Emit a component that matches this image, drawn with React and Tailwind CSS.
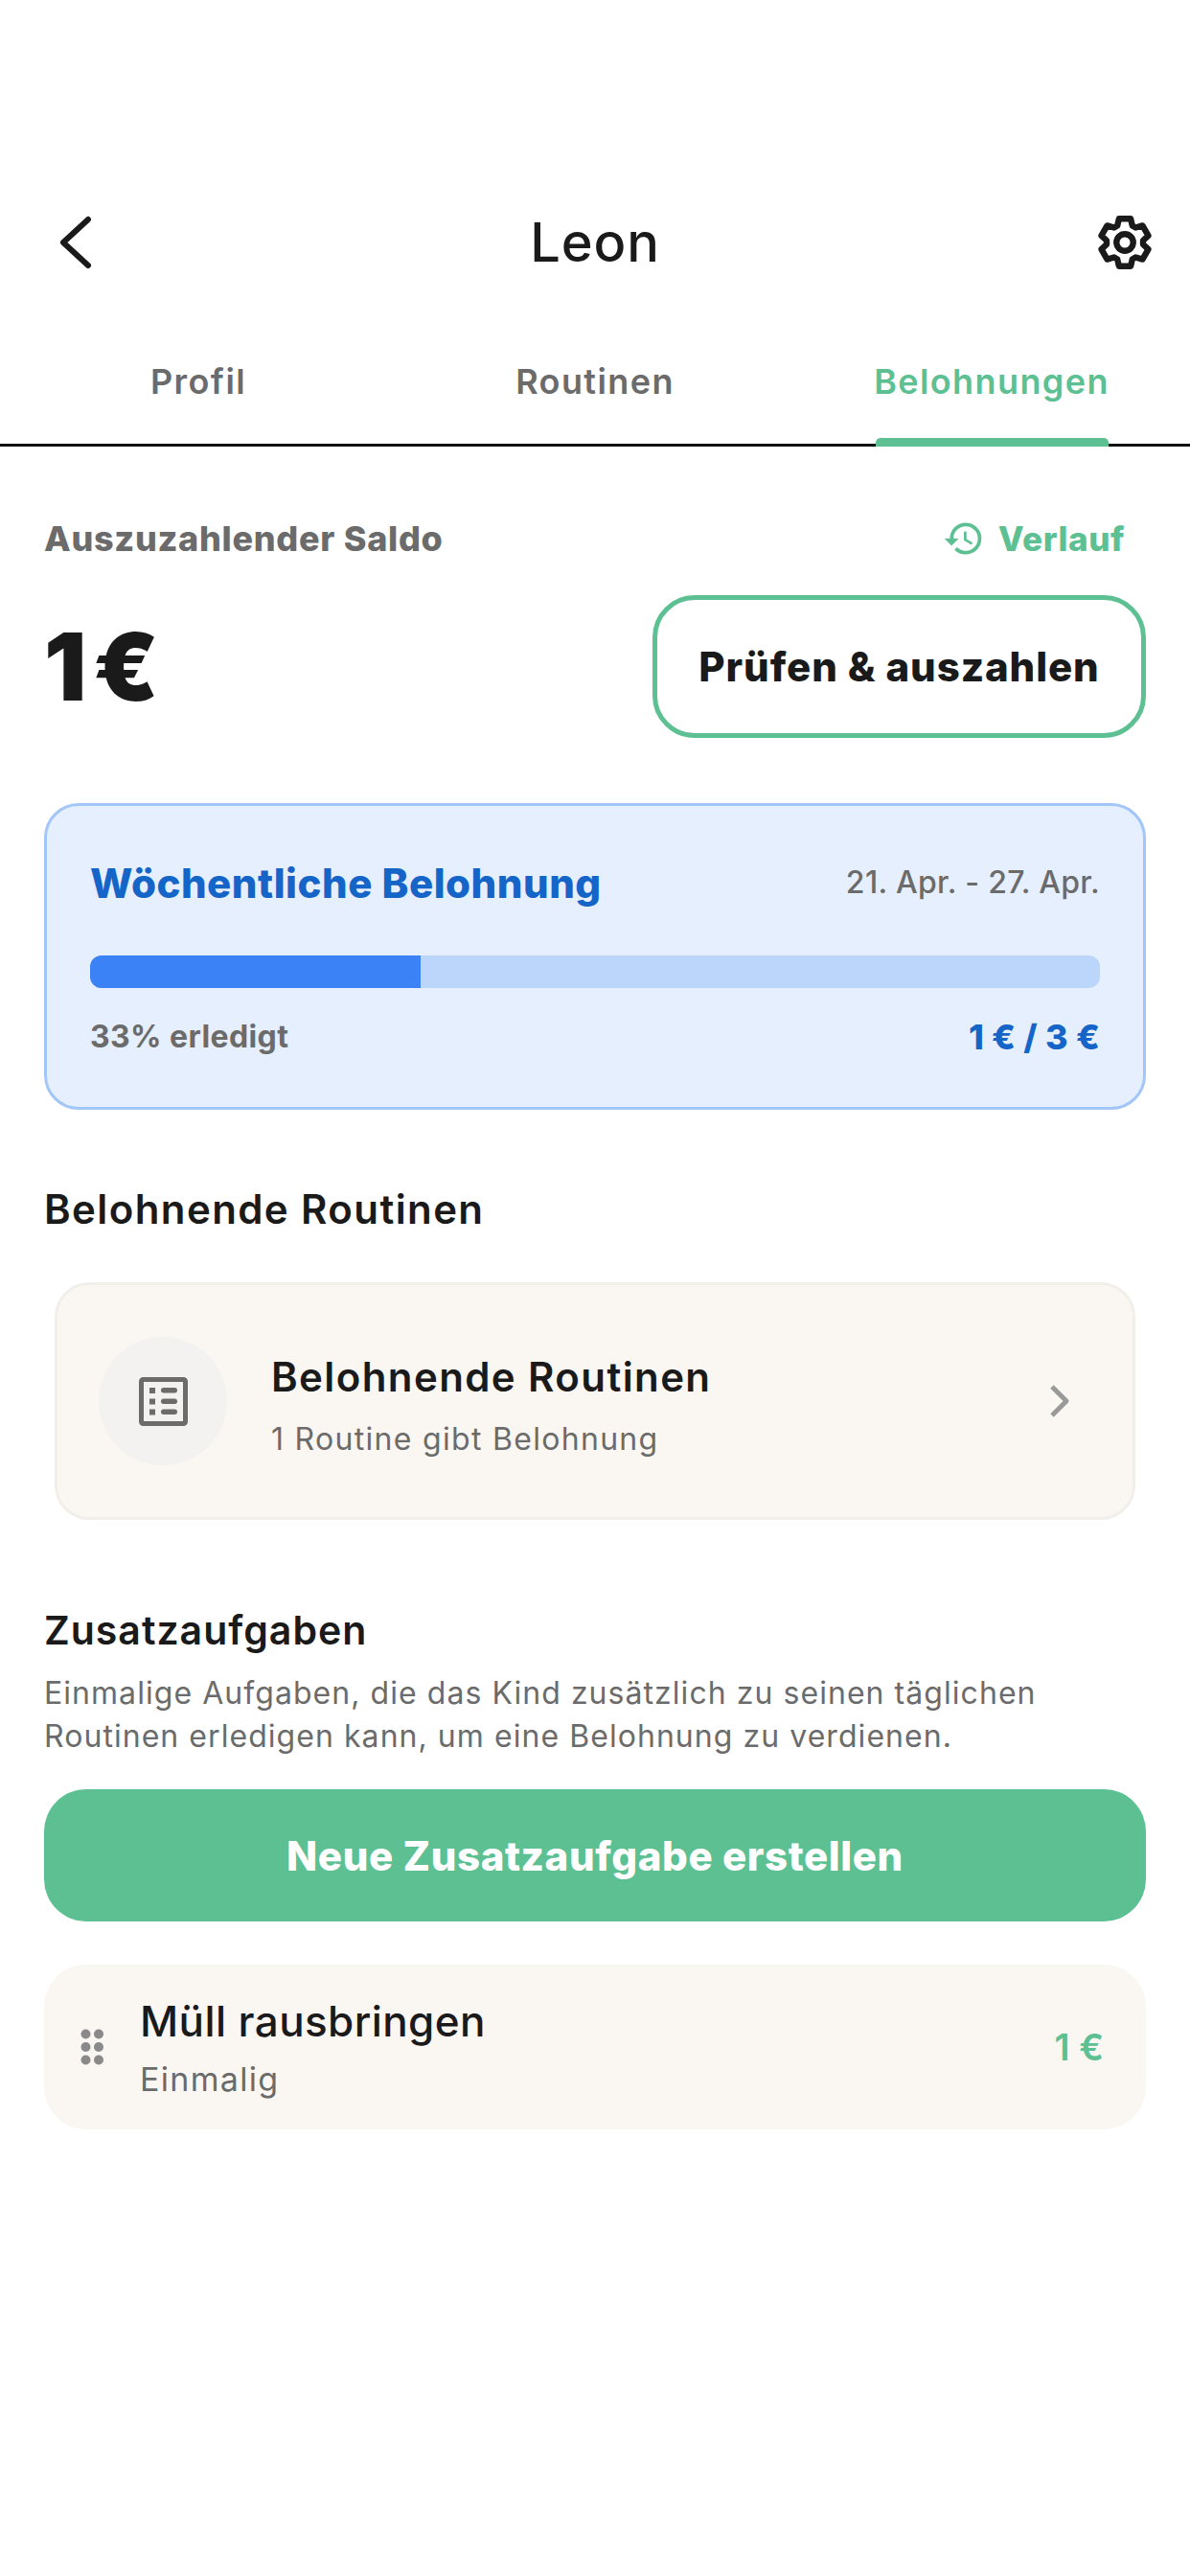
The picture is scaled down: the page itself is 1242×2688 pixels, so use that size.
import React from "react";
import { MdHistory } from "react-icons/md";

// 6 tooth gear outline, pointing up
const gearPath = () => {
  const pts = [];
  for (let k = 0; k < 6; k++) {
    const a = (k * Math.PI) / 3 - Math.PI / 2;
    const at = (r, off) => {
      const x = 50 + r * Math.cos(a + off);
      const y = 50 + r * Math.sin(a + off);
      return `${x.toFixed(1)} ${y.toFixed(1)}`;
    };
    pts.push(at(33, -0.42), at(44, -0.24), at(44, 0.24), at(33, 0.42));
  }
  return "M" + pts.join("L") + "Z";
};

const GearIcon = () => (
  <svg viewBox="0 0 100 100" className="w-[58px] h-[58px]" fill="none" stroke="#1a1a1a" strokeWidth="11" strokeLinejoin="round">
    <path d={gearPath()} />
    <circle cx="50" cy="50" r="15" />
  </svg>
);

const BackIcon = () => (
  <svg viewBox="0 0 36 56" className="w-[36px] h-[56px]" fill="none" stroke="#1a1a1a" strokeWidth="6" strokeLinecap="round" strokeLinejoin="round">
    <path d="M31 4 L5 28 L31 52" />
  </svg>
);

const ListIcon = () => (
  <svg viewBox="0 0 51 51" className="w-[51px] h-[51px]" fill="#6b6b6b">
    <rect x="2.5" y="2.5" width="46" height="46" rx="2" fill="none" stroke="#6b6b6b" strokeWidth="5" />
    <rect x="11" y="11" width="6" height="6" />
    <rect x="11" y="22.5" width="6" height="6" />
    <rect x="11" y="33.5" width="6" height="6" />
    <rect x="23" y="11" width="17" height="5.5" rx="2.75" />
    <rect x="23" y="22.5" width="17" height="5.5" rx="2.75" />
    <rect x="23" y="33.5" width="17" height="5.5" rx="2.75" />
  </svg>
);

const ChevronRight = () => (
  <svg viewBox="0 0 22 34" className="w-[22px] h-[34px]" fill="none" stroke="#9a9a9a" strokeWidth="5" strokeLinejoin="round">
    <path d="M3 2 L18 17 L3 32" />
  </svg>
);

const GripIcon = () => (
  <svg viewBox="0 0 24 38" className="w-[24px] h-[38px]" fill="#8a8a8a">
    {[5.5, 19].map((x) =>
      [5.5, 19, 32.5].map((y) => <circle key={`${x}-${y}`} cx={x} cy={y} r="5" />)
    )}
  </svg>
);

const tabs = ["Profil", "Routinen", "Belohnungen"];

export default function App() {
  return (
    <div className="w-[1242px] h-[2688px] bg-white text-[#1a1a1a] font-['Inter','Noto_Sans',sans-serif]">
      {/* header */}
      <div className="pt-[218px] pl-[61px] pr-[39px] h-[288px] flex items-start justify-between">
        <div className="h-[70px] w-[60px] flex items-center"><BackIcon /></div>
        <div className="h-[70px] flex items-center text-[56px] font-medium tracking-[0.8px] leading-none">Leon</div>
        <div className="h-[70px] w-[82px] flex items-center justify-end"><GearIcon /></div>
      </div>

      {/* tabs */}
      <div className="grid grid-cols-3 h-[178px] border-b-[3px] border-[#111111]">
        {tabs.map((t, i) => (
          <div key={t} className="relative flex justify-center pt-[90px]">
            <span className={`text-[36px] leading-[40px] font-semibold tracking-[1.4px] ${i === 2 ? "text-[#5cc092]" : "text-[#6b6b6b]"}`}>{t}</span>
            {i === 2 && <div className="absolute left-[86px] bottom-[-3px] w-[243px] h-[9px] rounded-t-[5px] bg-[#5cc092]" />}
          </div>
        ))}
      </div>

      <div className="px-[46px]">
        {/* saldo */}
        <div className="flex items-center justify-between pt-[74px] pr-[22px]">
          <span className="text-[36px] leading-[44px] font-extrabold tracking-[0.7px] text-[#6b6b6b]">Auszuzahlender Saldo</span>
          <div className="flex items-center gap-[14px] text-[#5cc092]">
            <MdHistory className="text-[44px]" />
            <span className="text-[35px] leading-[44px] font-extrabold tracking-[0.6px]">Verlauf</span>
          </div>
        </div>
        <div className="flex items-center justify-between mt-[37px]">
          <span className="text-[98px] leading-none font-black tracking-[7px]">1€</span>
          <div className="w-[515px] h-[149px] rounded-[44px] border-[5px] border-[#5cc092] flex items-center justify-center text-[42px] font-extrabold tracking-[0.9px]">Prüfen &amp; auszahlen</div>
        </div>

        {/* weekly reward */}
        <div className="mt-[68px] h-[320px] rounded-[36px] border-[3px] border-[#a3c6f8] bg-[#e5effe] px-[45px] pt-[50px]">
          <div className="flex items-center justify-between h-[60px]">
            <span className="text-[42px] font-extrabold tracking-[0.5px] text-[#1565c8]">Wöchentliche Belohnung</span>
            <span className="text-[32px] font-medium tracking-[0.3px] text-[#6b6b6b]">21. Apr. - 27. Apr.</span>
          </div>
          <div className="mt-[46px] h-[34px] rounded-[12px] bg-[#bbd5fb] overflow-hidden">
            <div className="h-full w-[32.7%] bg-[#3b82f6]" />
          </div>
          <div className="mt-[31px] flex items-center justify-between h-[40px]">
            <span className="text-[32px] font-bold tracking-[0.4px] text-[#6b6b6b]">33% erledigt</span>
            <span className="text-[36px] font-extrabold tracking-[0.2px] text-[#1565c8]">1 € / 3 €</span>
          </div>
        </div>

        {/* rewarding routines */}
        <div className="mt-[78px] h-[50px] flex items-center text-[42px] font-semibold tracking-[1.4px]">Belohnende Routinen</div>
        <div className="mx-[11px] mt-[52px] h-[248px] rounded-[36px] border-[3px] border-[#f2efeb] bg-[#faf7f3] flex items-center pl-[43px] pr-[65px]">
          <div className="w-[134px] h-[134px] rounded-full bg-[#f3f2f0] flex items-center justify-center shrink-0"><ListIcon /></div>
          <div className="ml-[46px] flex-1">
            <div className="text-[42px] leading-[50px] font-semibold tracking-[1.4px] mt-[10px]">Belohnende Routinen</div>
            <div className="mt-[20px] text-[32px] leading-[40px] tracking-[1.3px] text-[#6b6b6b]">1 Routine gibt Belohnung</div>
          </div>
          <ChevronRight />
        </div>

        {/* extra tasks */}
        <div className="mt-[91px] h-[50px] flex items-center text-[41px] font-semibold tracking-[1px]">Zusatzaufgaben</div>
        <p className="mt-[17px] text-[32px] leading-[45px] tracking-[1.05px] text-[#6b6b6b]">Einmalige Aufgaben, die das Kind zusätzlich zu seinen täglichen<br />Routinen erledigen kann, um eine Belohnung zu verdienen.</p>
        <div className="mt-[33px] h-[138px] rounded-[44px] bg-[#5cc092] flex items-center justify-center text-white text-[42px] font-extrabold tracking-[0.6px]">Neue Zusatzaufgabe erstellen</div>
        <div className="mt-[45px] h-[172px] rounded-[44px] bg-[#faf7f3] flex items-center pl-[38px] pr-[44px]">
          <GripIcon />
          <div className="ml-[38px] flex-1">
            <div className="text-[44px] leading-[50px] font-medium tracking-[0.4px] mt-[1px]">Müll rausbringen</div>
            <div className="mt-[16px] text-[34px] leading-[40px] tracking-[1.3px] text-[#6b6b6b]">Einmalig</div>
          </div>
          <span className="text-[38px] font-semibold text-[#5cc092]">1 €</span>
        </div>
      </div>
    </div>
  );
}
